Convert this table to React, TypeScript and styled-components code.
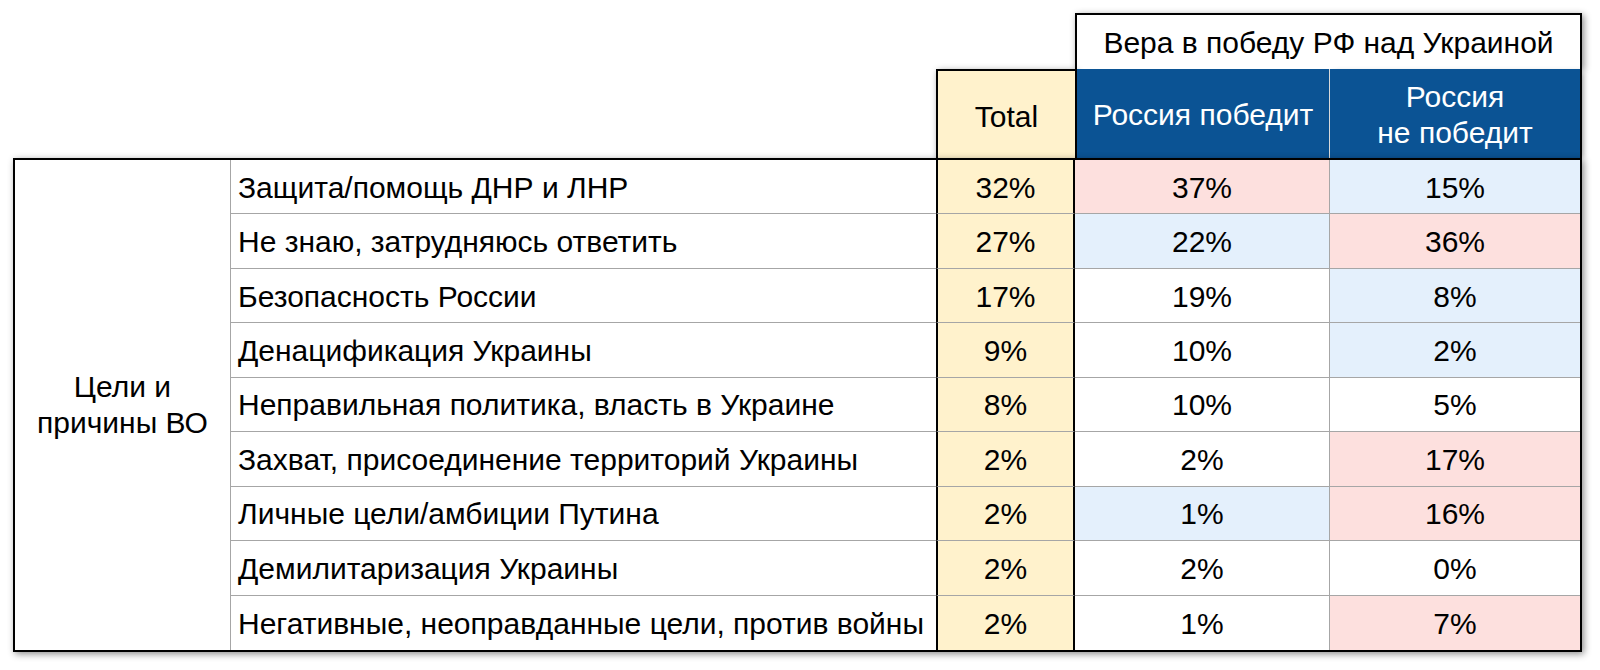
import React from 'react';
import styled, { createGlobalStyle } from 'styled-components';

const GlobalStyle = createGlobalStyle`
  html, body {
    margin: 0;
    padding: 0;
    background: #ffffff;
  }
  body {
    font-family: 'Liberation Sans', Arial, sans-serif;
    color: #000000;
  }
`;

type Tone = 'none' | 'pink' | 'blue';

const tones: Record<Tone, string> = {
  none: '#ffffff',
  pink: '#fde0de',
  blue: '#e4f0fc',
};

const shadow = '2px 2px 7px rgba(0, 0, 0, 0.45)';

const Page = styled.div`
  padding: 13px 0 0 13px;
  width: 1600px;
  height: 670px;
  box-sizing: border-box;
  font-size: 30px;
`;

const Layout = styled.div`
  display: grid;
  grid-template-columns: 218px 705px 139px 254px 253px;
  grid-template-rows: 56px 89px 494px;
`;

const GroupTitle = styled.div`
  grid-column: 4 / 6;
  grid-row: 1;
  display: flex;
  align-items: center;
  justify-content: center;
  background: #ffffff;
  border: 2px solid #000;
  border-bottom: none;
  box-shadow: ${shadow};
  padding-top: 2px;
`;

const TotalHead = styled.div`
  grid-column: 3;
  grid-row: 2;
  display: flex;
  align-items: center;
  justify-content: center;
  background: #fff2cc;
  border: 2px solid #000;
  border-right: none;
  border-bottom: none;
  box-shadow: ${shadow};
  padding-top: 4px;
`;

const BlueHead = styled.div<{ $col: number; $last?: boolean }>`
  grid-column: ${(p) => p.$col};
  grid-row: 2;
  display: flex;
  align-items: center;
  justify-content: center;
  text-align: center;
  background: #0b5394;
  color: #ffffff;
  line-height: 36px;
  padding-top: 2px;
  border-left: ${(p) => (p.$last ? '1px solid #d9d9d9' : '2px solid #000')};
  border-right: ${(p) => (p.$last ? '2px solid #000' : 'none')};
  box-shadow: ${(p) => (p.$last ? '3px 2px 6px -2px rgba(0,0,0,0.45)' : 'none')};
`;

const Table = styled.div`
  grid-column: 1 / 6;
  grid-row: 3;
  display: grid;
  grid-template-columns: 216px 705px 139px 254px 251px;
  grid-template-rows: repeat(9, 1fr);
  border: 2px solid #000;
  box-shadow: ${shadow};
  background: #ffffff;
  position: relative;
  z-index: 1;
`;

const GroupLabel = styled.div`
  grid-column: 1;
  grid-row: 1 / 10;
  display: flex;
  align-items: center;
  justify-content: center;
  text-align: center;
  line-height: 36px;
  border-right: 1px solid #a6a6a6;
`;

const Reason = styled.div<{ $last: boolean }>`
  display: flex;
  align-items: center;
  padding: 2px 0 0 7px;
  white-space: nowrap;
  border-bottom: ${(p) => (p.$last ? 'none' : '1px solid #a6a6a6')};
`;

const TotalCell = styled.div<{ $last: boolean }>`
  display: flex;
  align-items: center;
  justify-content: center;
  padding-top: 2px;
  background: #fff2cc;
  border-left: 2px solid #000;
  border-right: 2px solid #000;
  border-bottom: ${(p) => (p.$last ? 'none' : '1px solid #a6a6a6')};
`;

const ValueCell = styled.div<{ $tone: Tone; $last: boolean; $edge?: boolean }>`
  display: flex;
  align-items: center;
  justify-content: center;
  padding-top: 2px;
  background: ${(p) => tones[p.$tone]};
  border-left: ${(p) => (p.$edge ? '1px solid #a6a6a6' : 'none')};
  border-bottom: ${(p) => (p.$last ? 'none' : '1px solid #a6a6a6')};
`;

type Row = {
  reason: string;
  total: string;
  win: [string, Tone];
  lose: [string, Tone];
};

const rows: Row[] = [
  { reason: 'Защита/помощь ДНР и ЛНР', total: '32%', win: ['37%', 'pink'], lose: ['15%', 'blue'] },
  { reason: 'Не знаю, затрудняюсь ответить', total: '27%', win: ['22%', 'blue'], lose: ['36%', 'pink'] },
  { reason: 'Безопасность России', total: '17%', win: ['19%', 'none'], lose: ['8%', 'blue'] },
  { reason: 'Денацификация Украины', total: '9%', win: ['10%', 'none'], lose: ['2%', 'blue'] },
  { reason: 'Неправильная политика, власть в Украине', total: '8%', win: ['10%', 'none'], lose: ['5%', 'none'] },
  { reason: 'Захват, присоединение территорий Украины', total: '2%', win: ['2%', 'none'], lose: ['17%', 'pink'] },
  { reason: 'Личные цели/амбиции Путина', total: '2%', win: ['1%', 'blue'], lose: ['16%', 'pink'] },
  { reason: 'Демилитаризация Украины', total: '2%', win: ['2%', 'none'], lose: ['0%', 'none'] },
  { reason: 'Негативные, неоправданные цели, против войны', total: '2%', win: ['1%', 'none'], lose: ['7%', 'pink'] },
];

export default function App() {
  return (
    <Page>
      <GlobalStyle />
      <Layout>
        <GroupTitle>Вера в победу РФ над Украиной</GroupTitle>
        <TotalHead>Total</TotalHead>
        <BlueHead $col={4}>Россия победит</BlueHead>
        <BlueHead $col={5} $last>
          Россия
          <br />
          не победит
        </BlueHead>
        <Table>
          <GroupLabel>
            Цели и
            <br />
            причины ВО
          </GroupLabel>
          {rows.map((r, i) => {
            const last = i === rows.length - 1;
            return (
              <React.Fragment key={r.reason}>
                <Reason $last={last}>{r.reason}</Reason>
                <TotalCell $last={last}>{r.total}</TotalCell>
                <ValueCell $tone={r.win[1]} $last={last}>
                  {r.win[0]}
                </ValueCell>
                <ValueCell $tone={r.lose[1]} $last={last} $edge>
                  {r.lose[0]}
                </ValueCell>
              </React.Fragment>
            );
          })}
        </Table>
      </Layout>
    </Page>
  );
}
